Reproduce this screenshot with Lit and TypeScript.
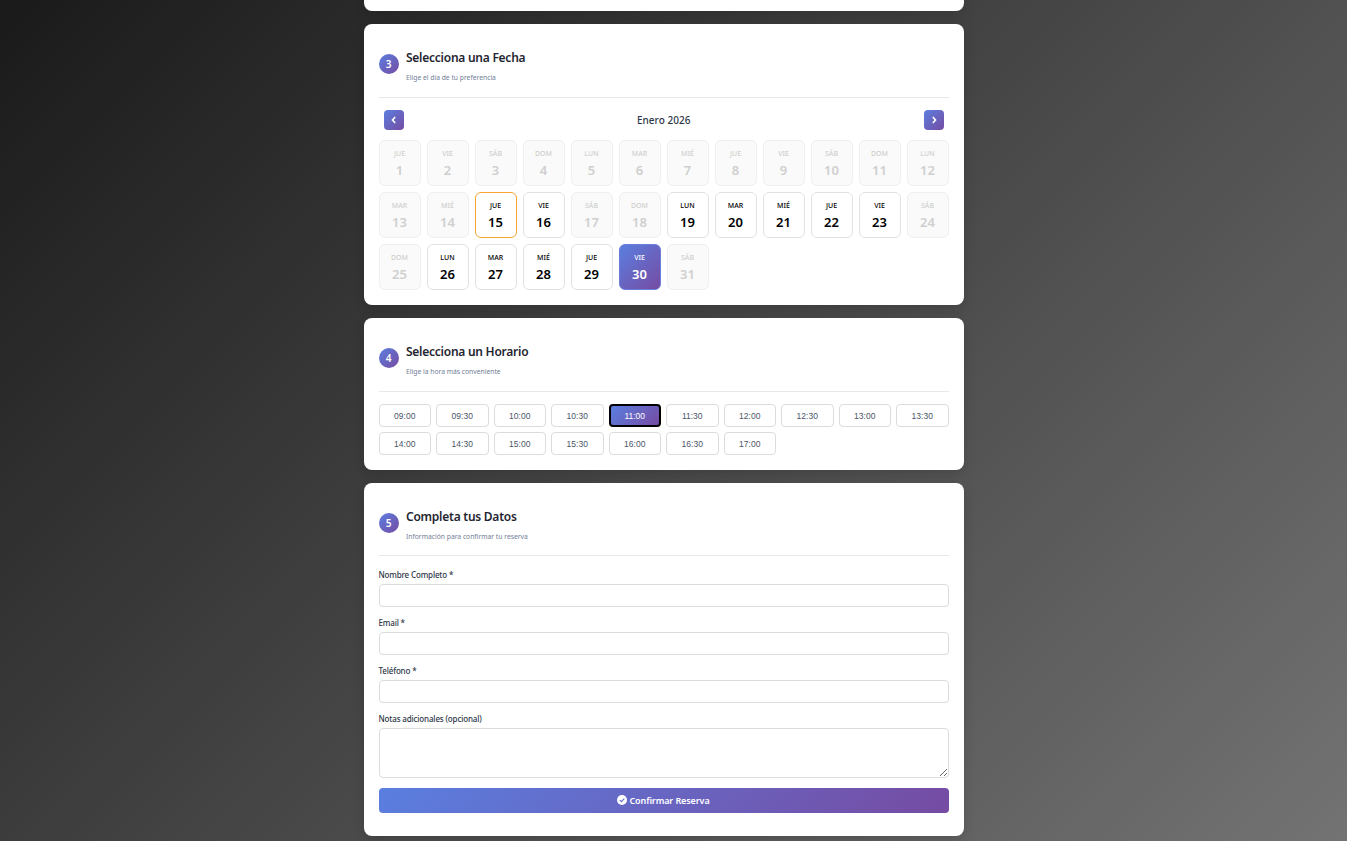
import { LitElement, html, css } from "lit";
import { customElement } from "lit/decorators.js";

const DAYS = ["DOM", "LUN", "MAR", "MIÉ", "JUE", "VIE", "SÁB"];
const AVAILABLE = new Set([15, 16, 19, 20, 21, 22, 23, 26, 27, 28, 29, 30]);
const TIMES = ["09:00", "09:30", "10:00", "10:30", "11:00", "11:30", "12:00", "12:30", "13:00", "13:30", "14:00", "14:30", "15:00", "15:30", "16:00", "16:30", "17:00"];

@customElement("app-root")
export class AppRoot extends LitElement {
  static styles = css`
    :host {
      display: block;
      height: 841px;
      overflow: hidden;
      padding-right: 20px;
      background: linear-gradient(135deg, #1a1a1a 0%, #737373 100%);
      font-family: "Noto Sans", "Open Sans", sans-serif;
      color: #2d3748;
    }
    .page {
      width: 600px;
      margin: 0 auto;
      display: flex;
      flex-direction: column;
      gap: 13px;
    }
    .card {
      background: #fff;
      border-radius: 8px;
      padding: 15px;
      box-shadow: 0 4px 12px rgba(0, 0, 0, 0.15);
    }
    .stub { height: 11px; padding: 0; border-radius: 0 0 8px 8px; }
    .form { padding-bottom: 23px; }
    .head {
      display: flex;
      align-items: flex-start;
      gap: 7.5px;
      padding-bottom: 14px;
      margin-bottom: 12px;
      border-bottom: 1px solid #e8e8e8;
      height: 44px;
    }
    .form .head { height: 43px; }
    .num {
      width: 20px;
      height: 20px;
      flex: none;
      border-radius: 50%;
      background: linear-gradient(135deg, #5a7fe0 0%, #764ba2 100%);
      color: #fff;
      font-size: 10px;
      font-weight: 600;
      display: flex;
      align-items: center;
      justify-content: center;
      margin-top: 15px;
    }
    .titles { display: flex; flex-direction: column; gap: 7px; margin-top: 11px; }
    .title { font-size: 12px; letter-spacing: -0.25px; font-weight: 600; line-height: 16px; color: #1f2530; }
    .sub { font-size: 6.75px; line-height: 10px; color: #718096; }
    .nav {
      display: flex;
      align-items: center;
      justify-content: space-between;
      padding: 0 4.5px 0 5px;
      margin-bottom: 10px;
    }
    .month { font-size: 10px; font-weight: 500; letter-spacing: 0.05px; color: #2d3748; }
    .arrow {
      width: 20px;
      height: 20px;
      border-radius: 4px;
      background: linear-gradient(135deg, #5a7fe0 0%, #764ba2 100%);
      display: flex;
      align-items: center;
      justify-content: center;
    }
    .cal {
      display: grid;
      grid-template-columns: repeat(12, 42px);
      grid-auto-rows: 46px;
      gap: 6px;
    }
    .day {
      box-sizing: border-box;
      border: 1px solid #e2e2e2;
      border-radius: 6px;
      display: flex;
      flex-direction: column;
      align-items: center;
      color: #000;
      background: #fff;
      padding-top: 8px;
    }
    .dow { font-size: 7px; font-weight: 500; line-height: 10px; }
    .dn { font-size: 13px; font-weight: 600; line-height: 18px; margin-top: 2px; }
    .day.off { background: #fafafa; border-color: #efefef; color: #cfcfcf; }
    .day.today { border-color: #f6a532; }
    .day.sel {
      background: linear-gradient(135deg, #5a7fe0 0%, #764ba2 100%);
      color: #fff;
      border-color: #6a7fdc;
    }
    .times {
      display: grid;
      grid-template-columns: repeat(10, 1fr);
      grid-auto-rows: 23px;
      gap: 5px;
    }
    .time {
      box-sizing: border-box;
      border: 1px solid #dcdcdc;
      border-radius: 4px;
      background: #fff;
      font-family: "Liberation Sans", Arial, sans-serif;
      font-size: 8.5px;
      color: #4a5568;
      display: flex;
      align-items: center;
      justify-content: center;
    }
    .time.sel {
      background: linear-gradient(135deg, #5a7fe0 0%, #764ba2 100%);
      color: #fff;
      border: 2px solid #000;
      border-radius: 4px;
    }
    .field { display: flex; flex-direction: column; gap: 4px; margin-bottom: 9px; }
    label { font-size: 8px; letter-spacing: -0.15px; font-weight: 500; line-height: 11px; color: #2d3748; display: block; margin-top: 1px; }
    .input {
      box-sizing: border-box;
      width: 100%;
      height: 23px;
      border: 1px solid #dcdcdc;
      border-radius: 4px;
      background: #fff;
      display: block;
      padding: 0;
      margin: 0;
      outline: none;
    }
    textarea.input { height: 50px; resize: vertical; }
    .last { margin-bottom: 10px; }
    .submit {
      height: 25px;
      padding-bottom: 1px;
      box-sizing: border-box;
      border-radius: 4px;
      background: linear-gradient(135deg, #5a7fe0 0%, #764ba2 100%);
      color: #fff;
      font-size: 9px;
      letter-spacing: -0.1px;
      font-weight: 600;
      display: flex;
      align-items: center;
      justify-content: center;
      gap: 2px;
    }
  `;

  private head(n: number, t: string, s: string) {
    return html`<div class="head">
      <div class="num">${n}</div>
      <div class="titles"><div class="title">${t}</div><div class="sub">${s}</div></div>
    </div>`;
  }

  render() {
    const days = Array.from({ length: 31 }, (_, i) => i + 1);
    return html`<div class="page">
      <div class="card stub"></div>
      <section class="card">
        ${this.head(3, "Selecciona una Fecha", "Elige el día de tu preferencia")}
        <div class="nav">
          <div class="arrow"><svg width="10" height="10" viewBox="0 0 10 10" fill="none" stroke="#fff" stroke-width="1.6"><path d="M6.2 2 3.5 5l2.7 3" /></svg></div>
          <div class="month">Enero 2026</div>
          <div class="arrow"><svg width="10" height="10" viewBox="0 0 10 10" fill="none" stroke="#fff" stroke-width="1.6"><path d="M3.8 2 6.5 5 3.8 8" /></svg></div>
        </div>
        <div class="cal">
          ${days.map((d) => {
            const cls = ["day", AVAILABLE.has(d) ? "" : "off", d === 15 ? "today" : "", d === 30 ? "sel" : ""].join(" ");
            return html`<div class=${cls}><span class="dow">${DAYS[(d + 3) % 7]}</span><span class="dn">${d}</span></div>`;
          })}
        </div>
      </section>
      <section class="card">
        ${this.head(4, "Selecciona un Horario", "Elige la hora más conveniente")}
        <div class="times">
          ${TIMES.map((t) => html`<div class="time ${t === "11:00" ? "sel" : ""}">${t}</div>`)}
        </div>
      </section>
      <section class="card form">
        ${this.head(5, "Completa tus Datos", "Información para confirmar tu reserva")}
        <div class="field"><label>Nombre Completo *</label><input class="input" /></div>
        <div class="field"><label>Email *</label><input class="input" /></div>
        <div class="field"><label>Teléfono *</label><input class="input" /></div>
        <div class="field last"><label>Notas adicionales (opcional)</label><textarea class="input"></textarea></div>
        <div class="submit">
          <svg width="10" height="10" viewBox="0 0 10 10"><circle cx="5" cy="5" r="5" fill="#fff" /><path d="M2.8 5.1 4.4 6.7 7.3 3.6" fill="none" stroke="#6a6fc8" stroke-width="1.1" /></svg>
          <span>Confirmar Reserva</span>
        </div>
      </section>
    </div>`;
  }
}
